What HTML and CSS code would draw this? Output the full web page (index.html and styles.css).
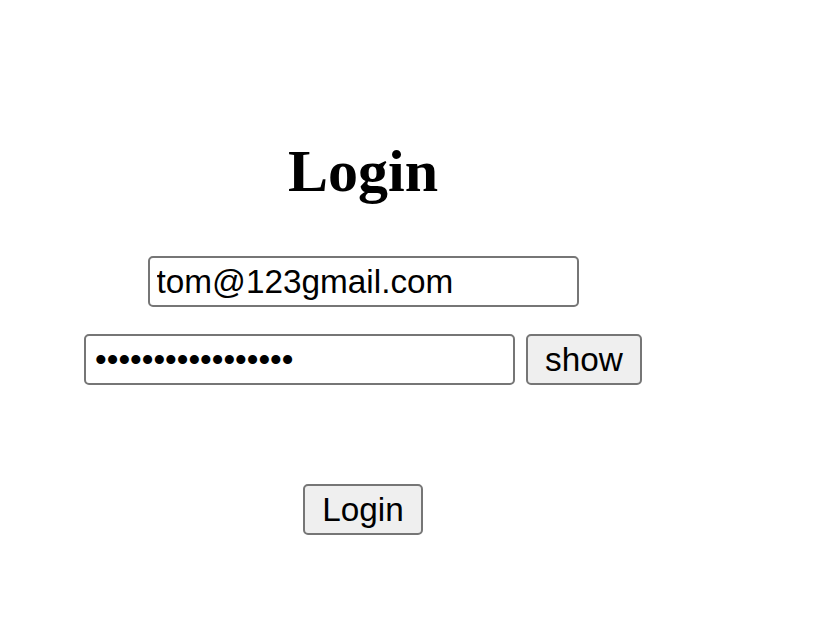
FILE: index.html
```html
<!DOCTYPE html>
<html>
<head>
<meta charset="utf-8">
<link rel="stylesheet" href="styles.css">
</head>
<body>
<div class="wrap">
  <h2 class="title">Login</h2>
  <input class="field email" type="text" value="tom@123gmail.com">
  <div class="pw-row">
    <input class="field password" type="password" value="abcdefghijklmnopq">
    <button class="btn">show</button>
  </div>
  <button class="btn login">Login</button>
</div>
</body>
</html>
```
FILE: styles.css
```css
html, body {
  margin: 0;
  padding: 0;
  background: #ffffff;
}
.wrap {
  width: 726px;
  padding-top: 137px;
  display: flex;
  flex-direction: column;
  align-items: center;
}
.title {
  margin: 0;
  font-family: "Liberation Serif", "Times New Roman", serif;
  font-weight: bold;
  font-size: 60px;
  line-height: 69px;
  color: #000;
}
.field {
  box-sizing: border-box;
  width: 431px;
  height: 51px;
  margin: 0;
  padding: 0 7px;
  border: 2px solid #767676;
  border-radius: 5px;
  font-family: "Liberation Sans", Arial, sans-serif;
  font-size: 33.33px;
  color: #000;
  background: #fff;
  outline: none;
}
.password {
  padding-left: 9px;
}
.email {
  margin-top: 50px;
}
.pw-row {
  margin-top: 27px;
  display: flex;
  align-items: flex-start;
  gap: 11px;
}
.btn {
  box-sizing: border-box;
  height: 51px;
  margin: 0;
  padding: 0 17px;
  border: 2px solid #767676;
  border-radius: 5px;
  background: #efefef;
  font-family: "Liberation Sans", Arial, sans-serif;
  font-size: 33.33px;
  color: #000;
}
.login {
  margin-top: 99px;
}
```
